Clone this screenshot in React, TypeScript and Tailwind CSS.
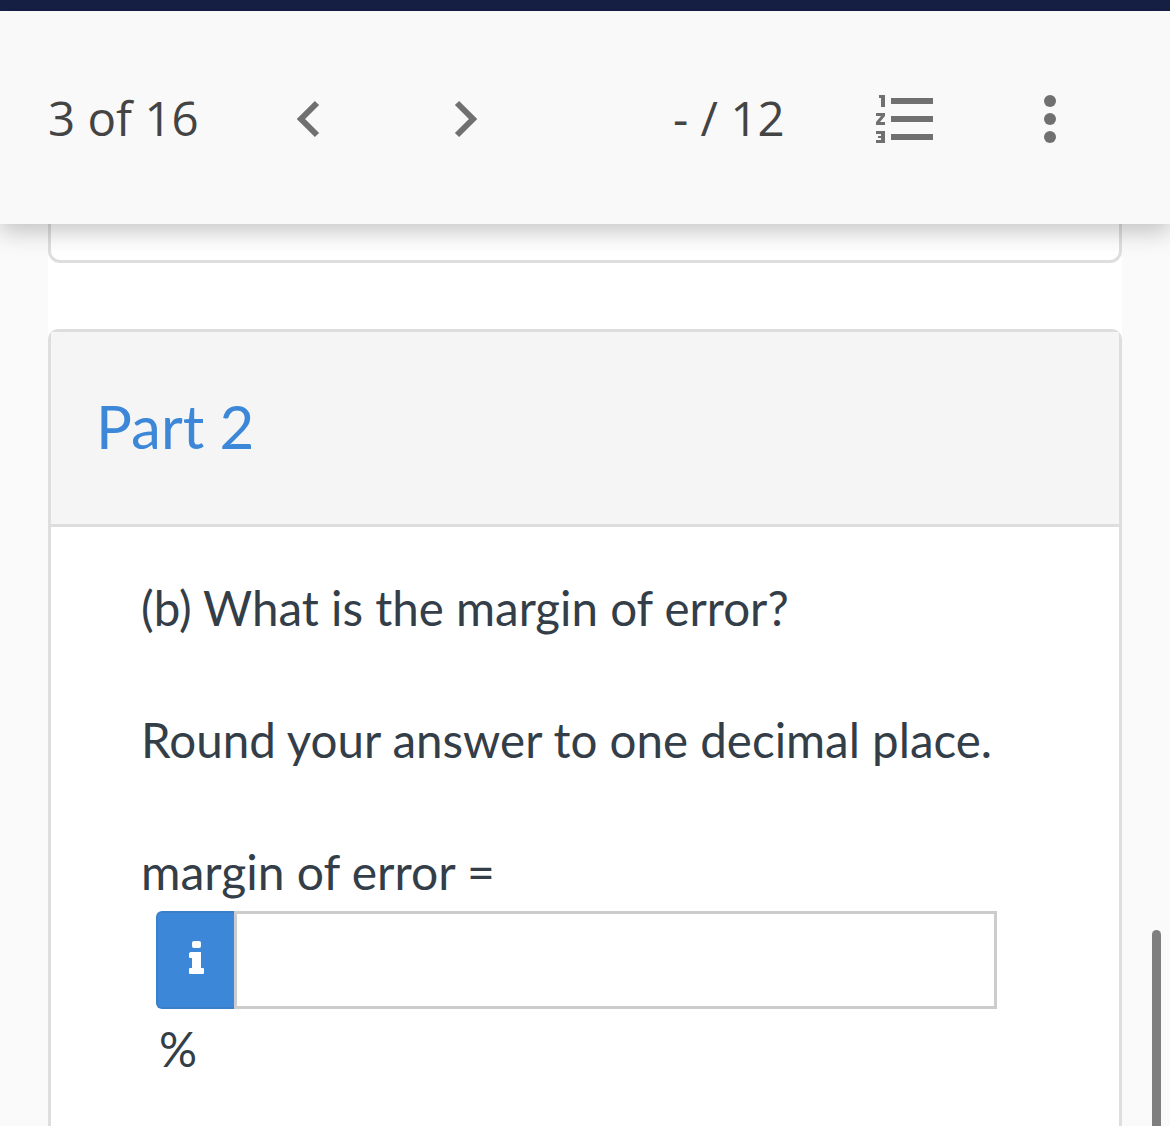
import React from 'react';

// iconos de la cabecera
const ChevronLeft = () => (
  <svg width="26" height="38" viewBox="0 0 26 38" className="mt-[3px] block">
    <path d="M22 3 L6 19 L22 35" fill="none" stroke="#707070" strokeWidth="6" />
  </svg>
);

const ChevronRight = () => (
  <svg width="26" height="38" viewBox="0 0 26 38" className="mt-[3px] block">
    <path d="M4 3 L20 19 L4 35" fill="none" stroke="#707070" strokeWidth="6" />
  </svg>
);

const NumberedList = () => (
  <svg width="58" height="48" viewBox="0 0 58 48" className="mt-[3px] block" fill="#707070">
    {/* 1 */}
    <rect x="3" y="0" width="6" height="3" />
    <rect x="5" y="0" width="4" height="12" />
    {/* 2 */}
    <path d="M0 18h9v3l-5 6h5v3H0v-3l5-6H0z" />
    {/* 3 */}
    <path d="M0 36h9v12H0v-3h5v-2H2v-2h3v-2H0z" />
    <rect x="15" y="3" width="42" height="6" />
    <rect x="15" y="21" width="42" height="6" />
    <rect x="15" y="39" width="42" height="6" />
  </svg>
);

const InfoIcon = () => (
  <svg width="15" height="33" viewBox="0 0 15 33" className="mb-[5px] block" fill="#ffffff">
    <rect x="3" y="0" width="9" height="7" rx="2" />
    <path d="M1 11.5a0.5 0.5 0 0 1 0.5-0.5H12V27h2a1 1 0 0 1 1 1v4a1 1 0 0 1-1 1H1a1 1 0 0 1-1-1v-4a1 1 0 0 1 1-1h2V17H1a1 1 0 0 1-1-1v-4z" />
  </svg>
);

const App = () => {
  return (
    <div className="relative h-[1126px] w-[1170px] overflow-hidden bg-[#fafafa] font-['Lato',sans-serif] text-[#333e48]">
      <div className="h-[11px] bg-[#161f45]" />

      <header className="relative z-10 flex h-[213px] items-center bg-[#f9f9f9] pl-[48px] shadow-[0_8px_22px_rgba(0,0,0,0.22)] font-['Open_Sans',sans-serif]">
        <span className="w-[247px] text-[47.5px] leading-none text-[#444444]">3 of 16</span>
        <ChevronLeft />
        <div className="w-[132px]" />
        <ChevronRight />
        <span className="ml-[194px] w-[203px] text-[47.5px] leading-none text-[#444444]">- / 12</span>
        <NumberedList />
        <div className="mt-[3px] ml-[110px] flex flex-col gap-[6px]">
          <span className="h-[12px] w-[12px] rounded-full bg-[#707070]" />
          <span className="h-[12px] w-[12px] rounded-full bg-[#707070]" />
          <span className="h-[12px] w-[12px] rounded-full bg-[#707070]" />
        </div>
      </header>

      <main className="mx-[48px] h-[902px] bg-white">
        <div className="h-[39px] rounded-b-[12px] border-x-[3px] border-b-[3px] border-[#dedede]" />

        <section className="mt-[66px] h-[797px] rounded-t-[10px] border-x-[3px] border-t-[3px] border-[#dedede]">
          <div className="flex h-[195px] items-center border-b-[3px] border-[#dedede] bg-[#f5f5f5] pb-[4px] pl-[45px]">
            <h2 className="text-[60px] leading-none font-normal text-[#3d87d8]">Part 2</h2>
          </div>

          <div className="pl-[90px]">
            <p className="mt-[51px] text-[47.5px] leading-[60px]">(b) What is the margin of error?</p>
            <p className="mt-[72px] text-[47.5px] leading-[60px]">Round your answer to one decimal place.</p>
            <p className="mt-[72px] text-[48px] leading-[60px]">margin of error =</p>

            <div className="mt-[9px] ml-[15px] flex h-[98px] w-[841px]">
              <div className="flex w-[78px] items-center justify-center rounded-l-[6px] border-[2px] border-r-0 border-[#3a7fc8] bg-[#3d87d8]">
                <InfoIcon />
              </div>
              <div className="flex-1 border-[3px] border-[#cccccc] bg-white" />
            </div>

            <p className="mt-[10px] ml-[18px] text-[47.5px] leading-[60px]">%</p>
          </div>
        </section>
      </main>

      {/* barra de scroll encima del contenido */}
      <div className="absolute top-[930px] left-[1152px] h-[196px] w-[9px] rounded-t-full bg-[#7f7f7f]" />
    </div>
  );
};

export default App;
